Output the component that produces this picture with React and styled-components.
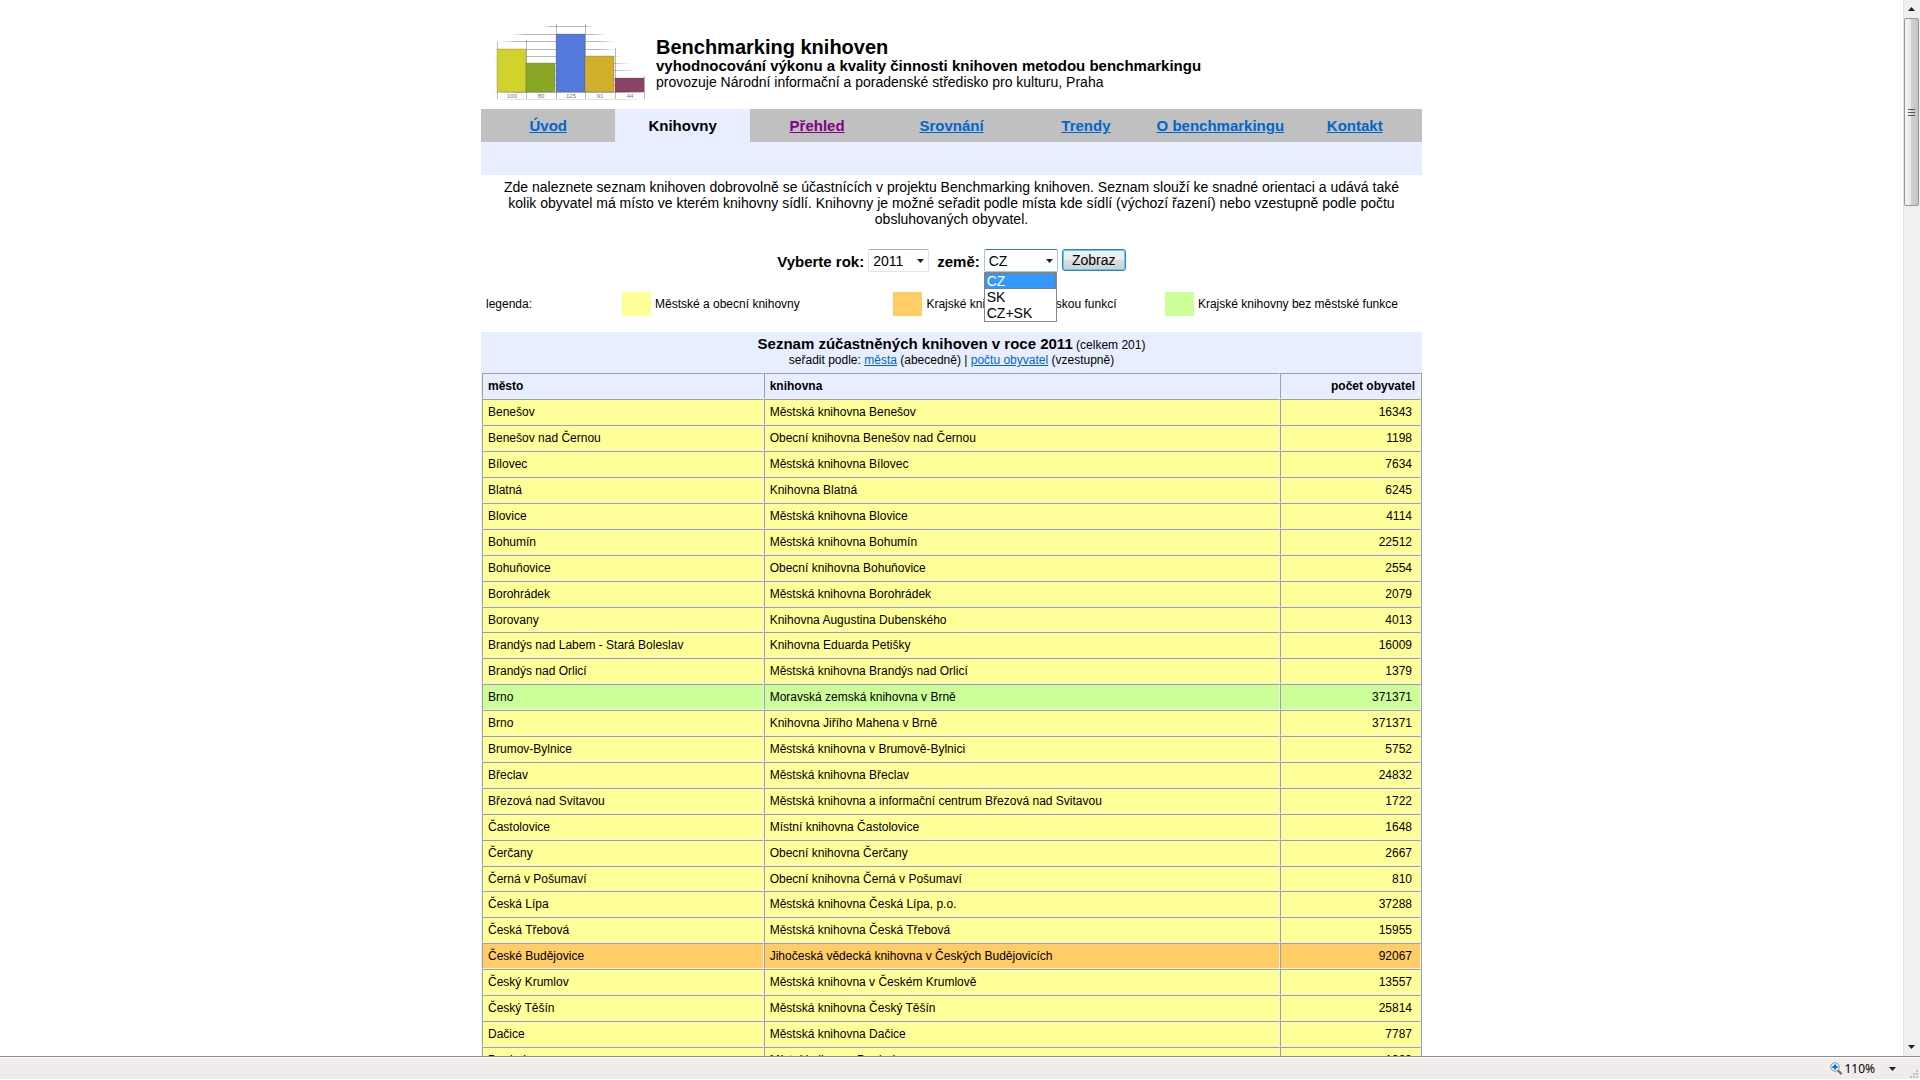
import React from 'react'
import styled, { createGlobalStyle } from 'styled-components'

const years = ['2011', '2010', '2009', '2008']
const countries = ['CZ', 'SK', 'CZ+SK']

const menu = [
    { label: 'Úvod' },
    { label: 'Knihovny', active: true },
    { label: 'Přehled', visited: true },
    { label: 'Srovnání' },
    { label: 'Trendy' },
    { label: 'O benchmarkingu' },
    { label: 'Kontakt' },
]

const kinds = {
    city: { color: '#ffff99', label: 'Městské a obecní knihovny' },
    regionCity: { color: '#ffcc66', label: 'Krajské knihovny s městskou funkcí' },
    region: { color: '#ccff99', label: 'Krajské knihovny bez městské funkce' },
}

const libraries = [
    ['Benešov', 'Městská knihovna Benešov', 16343],
    ['Benešov nad Černou', 'Obecní knihovna Benešov nad Černou', 1198],
    ['Bílovec', 'Městská knihovna Bílovec', 7634],
    ['Blatná', 'Knihovna Blatná', 6245],
    ['Blovice', 'Městská knihovna Blovice', 4114],
    ['Bohumín', 'Městská knihovna Bohumín', 22512],
    ['Bohuňovice', 'Obecní knihovna Bohuňovice', 2554],
    ['Borohrádek', 'Městská knihovna Borohrádek', 2079],
    ['Borovany', 'Knihovna Augustina Dubenského', 4013],
    ['Brandýs nad Labem - Stará Boleslav', 'Knihovna Eduarda Petišky', 16009],
    ['Brandýs nad Orlicí', 'Městská knihovna Brandýs nad Orlicí', 1379],
    ['Brno', 'Moravská zemská knihovna v Brně', 371371, 'region'],
    ['Brno', 'Knihovna Jiřího Mahena v Brně', 371371],
    ['Brumov-Bylnice', 'Městská knihovna v Brumově-Bylnici', 5752],
    ['Břeclav', 'Městská knihovna Břeclav', 24832],
    ['Březová nad Svitavou', 'Městská knihovna a informační centrum Březová nad Svitavou', 1722],
    ['Častolovice', 'Místní knihovna Častolovice', 1648],
    ['Čerčany', 'Obecní knihovna Čerčany', 2667],
    ['Černá v Pošumaví', 'Obecní knihovna Černá v Pošumaví', 810],
    ['Česká Lípa', 'Městská knihovna Česká Lípa, p.o.', 37288],
    ['Česká Třebová', 'Městská knihovna Česká Třebová', 15955],
    ['České Budějovice', 'Jihočeská vědecká knihovna v Českých Budějovicích', 92067, 'regionCity'],
    ['Český Krumlov', 'Městská knihovna v Českém Krumlově', 13557],
    ['Český Těšín', 'Městská knihovna Český Těšín', 25814],
    ['Dačice', 'Městská knihovna Dačice', 7787],
    ['Doubek', 'Místní knihovna Doubek', 1303],
]

const logoBars = [
    { x: 16, top: 39, color: '#d2d22d', value: '100' },
    { x: 45, top: 53, color: '#87a725', value: '80' },
    { x: 75, top: 24, color: '#5578dd', value: '125' },
    { x: 104, top: 46, color: '#d2ae2d', value: '91' },
    { x: 134, top: 68, color: '#8a4265', value: '44' },
]

// y, from, to
const logoLines = [
    [16, 62, 112],
    [24, 30, 126],
    [31, 18, 135],
    [39, 12, 138],
    [46, 12, 142],
    [53, 12, 150],
    [60, 12, 156],
    [68, 12, 165],
    [75, 12, 166],
    [82, 10, 168],
    [89, 12, 166],
]

function Logo() {
    return (
        <svg width="168" height="92" viewBox="0 0 168 92" role="img" aria-label="Graf benchmarkingu">
            <defs>
                <linearGradient id="fade">
                    <stop offset="0" stopColor="#8a8a8a" stopOpacity="0" />
                    <stop offset="0.15" stopColor="#8a8a8a" />
                    <stop offset="0.85" stopColor="#8a8a8a" />
                    <stop offset="1" stopColor="#8a8a8a" stopOpacity="0" />
                </linearGradient>
            </defs>
            {logoLines.map(([y, from, to]) => (
                <rect key={y} x={from} y={y} width={to - from} height="1" fill="url(#fade)" opacity={y === 89 ? 0.25 : 0.6} />
            ))}
            {[[16, 32], [45, 30], [75, 14], [104, 14], [134, 38], [163, 66]].map(([x, y]) => (
                <rect key={x} x={x} y={y} width="1" height={89 - y} fill="#777" opacity="0.5" />
            ))}
            {logoBars.map(bar => (
                <g key={bar.x}>
                    <rect x={bar.x} y={bar.top} width="29" height={82 - bar.top} fill={bar.color} stroke="#555" strokeOpacity="0.5" strokeWidth="0.5" />
                    <text x={bar.x + 15} y="88" fontSize="6" fill="#777" textAnchor="middle">{bar.value}</text>
                </g>
            ))}
        </svg>
    )
}

function ZoomIcon() {
    return (
        <svg width="12" height="13" viewBox="0 0 12 13" aria-hidden="true">
            <path d="M8 8.5l3 3" stroke="#9a6a43" strokeWidth="2.4" strokeLinecap="round" />
            <circle cx="5" cy="5" r="4.3" fill="#d8eefb" stroke="#8a9cad" />
            <path d="M5 2.4v5.2M2.4 5h5.2" stroke="#1470c8" strokeWidth="2" />
        </svg>
    )
}

function Arrow({ up }) {
    return (
        <svg width="7" height="4" viewBox="0 0 7 4" aria-hidden="true">
            <path d={up ? 'M0 4L3.5 0L7 4z' : 'M0 0H7L3.5 4z'} fill="#222" />
        </svg>
    )
}

export default function App() {
    return (
        <>
            <GlobalStyle />
            <Browser>
                <Viewport>
                    <Page>
                        <Header>
                            <Logo />
                            <div>
                                <Title>Benchmarking knihoven</Title>
                                <Subtitle>vyhodnocování výkonu a kvality činnosti knihoven metodou benchmarkingu</Subtitle>
                                <p>provozuje Národní informační a poradenské středisko pro kulturu, Praha</p>
                            </div>
                        </Header>
                        <Menu>
                            {menu.map(item => (
                                <MenuItem key={item.label} $active={item.active}>
                                    {item.active ? item.label : <Link href="#" $visited={item.visited}>{item.label}</Link>}
                                </MenuItem>
                            ))}
                        </Menu>
                        <SubMenu />
                        <Intro>
                            Zde naleznete seznam knihoven dobrovolně se účastnících v projektu Benchmarking knihoven. Seznam slouží ke snadné orientaci a udává také kolik obyvatel má místo ve kterém knihovny sídlí. Knihovny je možné seřadit podle místa kde sídlí (výchozí řazení) nebo vzestupně podle počtu obsluhovaných obyvatel.
                        </Intro>
                        <Filter onSubmit={e => e.preventDefault()}>
                            <Label htmlFor="year">Vyberte rok:</Label>
                            <SelectWrap>
                                <Select id="year" $width={61} defaultValue="2011">
                                    {years.map(year => <option key={year}>{year}</option>)}
                                </Select>
                                <SelectArrow><Arrow /></SelectArrow>
                            </SelectWrap>
                            <Label htmlFor="country" $spaced>země:</Label>
                            <SelectWrap>
                                <Select id="country" $width={74} $open defaultValue="CZ">
                                    {countries.map(country => <option key={country}>{country}</option>)}
                                </Select>
                                <SelectArrow><Arrow /></SelectArrow>
                                <Options>
                                    {countries.map((country, i) => <Option key={country} $selected={i === 0}>{country}</Option>)}
                                </Options>
                            </SelectWrap>
                            <Submit type="submit">Zobraz</Submit>
                        </Filter>
                        <Legend>
                            <span>legenda:</span>
                            {Object.values(kinds).map(kind => (
                                <LegendItem key={kind.label}>
                                    <Swatch $color={kind.color} />
                                    {kind.label}
                                </LegendItem>
                            ))}
                        </Legend>
                        <ListHeader>
                            <p><ListTitle>Seznam zúčastněných knihoven v roce 2011</ListTitle> (celkem 201)</p>
                            <p>seřadit podle: <Link href="#">města</Link> (abecedně) | <Link href="#">počtu obyvatel</Link> (vzestupně)</p>
                        </ListHeader>
                        <Table>
                            <colgroup>
                                <col width="30%" />
                                <col width="55%" />
                                <col width="15%" />
                            </colgroup>
                            <thead>
                                <tr>
                                    <th>město</th>
                                    <th>knihovna</th>
                                    <th>počet obyvatel</th>
                                </tr>
                            </thead>
                            <tbody>
                                {libraries.map(([city, name, people, kind = 'city']) => (
                                    <Row key={name} $color={kinds[kind].color}>
                                        <td>{city}</td>
                                        <td>{name}</td>
                                        <td>{people}</td>
                                    </Row>
                                ))}
                            </tbody>
                        </Table>
                    </Page>
                </Viewport>
                <Scrollbar>
                    <ScrollButton type="button" aria-label="Nahoru"><Arrow up /></ScrollButton>
                    <Thumb><Grip /><Grip /><Grip /></Thumb>
                    <ScrollSpace />
                    <ScrollButton type="button" aria-label="Dolů"><Arrow /></ScrollButton>
                </Scrollbar>
                <StatusBar>
                    <ZoomButton type="button"><ZoomIcon />110%</ZoomButton>
                    <ScrollButton type="button" aria-label="Změnit lupu"><Arrow /></ScrollButton>
                    <Resizer width="8" height="8" viewBox="0 0 8 8" aria-hidden="true">
                        <path d="M6 0h2v2h-2zM3 3h2v2h-2zM6 3h2v2h-2zM0 6h2v2h-2zM3 6h2v2h-2zM6 6h2v2h-2z" fill="#c0bcba" />
                    </Resizer>
                </StatusBar>
            </Browser>
        </>
    )
}

const GlobalStyle = createGlobalStyle`
    * {
        box-sizing: border-box;
    }

    body {
        margin: 0;
        background: #fff;
        color: #000;
        font-family: "Liberation Sans", Arial, sans-serif;
        font-size: 14px;
        line-height: 16px;
    }

    h1, h2, p, ul {
        margin: 0;
        padding: 0;
    }
`

const Browser = styled.div`
    display: grid;
    grid-template-columns: 1fr 17px;
    grid-template-rows: 1fr 24px;
    height: 100vh;
    overflow: hidden;
`

const Viewport = styled.main`
    overflow: hidden;
    min-height: 0;
`

const Page = styled.div`
    max-width: 941px;
    margin: 0 auto;
    padding-top: 10px;
`

const Header = styled.header`
    display: flex;
    align-items: flex-start;
    gap: 7px;
    height: 99px;

    div {
        padding-top: 26px;
    }
`

const Title = styled.h1`
    font-size: 20px;
    line-height: 22px;
`

const Subtitle = styled.p`
    font-size: 15px;
    font-weight: bold;
`

const Menu = styled.nav`
    display: grid;
    grid-template-columns: repeat(7, 1fr);
    background: #c0c0c0;
`

const MenuItem = styled.span`
    padding: 9px 0 8px;
    background: ${props => props.$active ? '#e7eeff' : 'none'};
    font-size: 15px;
    font-weight: bold;
    text-align: center;
`

const Link = styled.a`
    color: ${props => props.$visited ? '#800080' : '#0066cc'};
`

const SubMenu = styled.div`
    height: 33px;
    background: #e7eeff;
`

const Intro = styled.p`
    padding: 4px 13px;
    text-align: center;
`

const Filter = styled.form`
    display: flex;
    justify-content: center;
    align-items: center;
    gap: 4px;
    margin-top: 18px;
    height: 24px;
`

const Label = styled.label`
    margin-left: ${props => props.$spaced ? '4px' : '0'};
    padding-top: 2px;
    font-size: 15px;
    font-weight: bold;
`

const SelectWrap = styled.div`
    position: relative;
    align-self: flex-start;
`

const Select = styled.select`
    display: block;
    appearance: none;
    width: ${props => props.$width}px;
    height: 23px;
    padding: 0 4px;
    border: 1px solid ${props => props.$open ? '#a4c9e3' : '#e2e3ea'};
    border-top-color: ${props => props.$open ? '#3d7bad' : '#abadb3'};
    border-radius: 2px;
    background: #fff;
    font: 14px "Liberation Sans", Arial, sans-serif;
    color: #000;
`

const SelectArrow = styled.span`
    position: absolute;
    top: 10px;
    right: 5px;
    display: flex;
    pointer-events: none;
`

const Options = styled.ul`
    position: absolute;
    top: 23px;
    left: 0;
    z-index: 1;
    width: 73px;
    border: 1px solid #828790;
    background: #fff;
    list-style: none;
`

const Option = styled.li`
    padding-left: 2px;
    background: ${props => props.$selected ? '#3399ff' : '#fff'};
    color: ${props => props.$selected ? '#fff' : '#000'};
    outline: ${props => props.$selected ? '1px dotted #cc6600' : 'none'};
    outline-offset: -1px;
`

const Submit = styled.button`
    align-self: flex-start;
    width: 64px;
    height: 22px;
    padding: 0;
    border: 1px solid #3c7fb1;
    border-radius: 3px;
    box-shadow: inset 0 0 0 1px #48d2f5;
    background: linear-gradient(#f2f2f2, #ebebeb 50%, #dddddd 50%, #cfcfcf);
    font: 14px "Liberation Sans", Arial, sans-serif;
    color: #000;
`

const Legend = styled.div`
    display: grid;
    grid-template-columns: 136px 29% 29% 1fr;
    align-items: center;
    margin-top: 19px;
    padding-left: 5px;
    font-size: 12px;
`

const LegendItem = styled.span`
    display: flex;
    align-items: center;
    gap: 4px;
    white-space: nowrap;
`

const Swatch = styled.i`
    width: 29px;
    height: 24px;
    background: ${props => props.$color};
`

const ListHeader = styled.div`
    margin-top: 16px;
    padding: 4px 0;
    background: #e7eeff;
    font-size: 12px;
    line-height: 15px;
    text-align: center;
`

const ListTitle = styled.b`
    font-size: 15px;
`

const Table = styled.table`
    width: 100%;
    table-layout: fixed;
    border: 1px solid #f0f0f0;
    border-right-color: #a0a0a0;
    border-spacing: 0;
    background: #e7eeff;
    font-size: 12px;

    th, td {
        height: 26px;
        padding: 0 5px;
        border: 1px solid #a0a0a0;
        border-right-color: #f0f0f0;
        border-bottom-color: #f0f0f0;
        text-align: left;
    }

    td:last-child {
        padding-right: 8px;
    }

    th:last-child, td:last-child {
        text-align: right;
    }
`

const Row = styled.tr`
    background: ${props => props.$color};

    &:nth-child(10n + 9) td {
        height: 25px;
    }
`

const Scrollbar = styled.aside`
    display: flex;
    flex-direction: column;
    padding-right: 1px;
    border-left: 1px solid #e4e4e4;
    background: #f0f0f0;
`

const ScrollButton = styled.button`
    display: flex;
    justify-content: center;
    align-items: center;
    height: 18px;
    padding: 0;
    border: 0;
    background: none;
`

const Thumb = styled.div`
    display: flex;
    flex-direction: column;
    justify-content: center;
    align-items: center;
    gap: 2px;
    height: 188px;
    border: 1px solid #979797;
    border-radius: 2px;
    background: linear-gradient(90deg, #f5f5f5, #e9e9eb 45%, #d0d0d3 50%, #c4c4c8);
`

const Grip = styled.i`
    width: 7px;
    height: 1px;
    background: #555;
`

const ScrollSpace = styled.div`
    flex: 1;
`

const StatusBar = styled.footer`
    grid-column: 1 / -1;
    display: flex;
    justify-content: flex-end;
    align-items: center;
    gap: 14px;
    border-top: 1px solid #8c8c8c;
    box-shadow: inset 0 1px #fff, inset 0 -1px #fff;
    background: #f0eceb;
`

const ZoomButton = styled.button`
    display: flex;
    align-items: center;
    gap: 2px;
    padding: 0;
    border: 0;
    background: none;
    font: 12px "Noto Sans", sans-serif;
    color: #000;
`

const Resizer = styled.svg`
    align-self: flex-end;
    margin: 0 2px 2px 0;
`
